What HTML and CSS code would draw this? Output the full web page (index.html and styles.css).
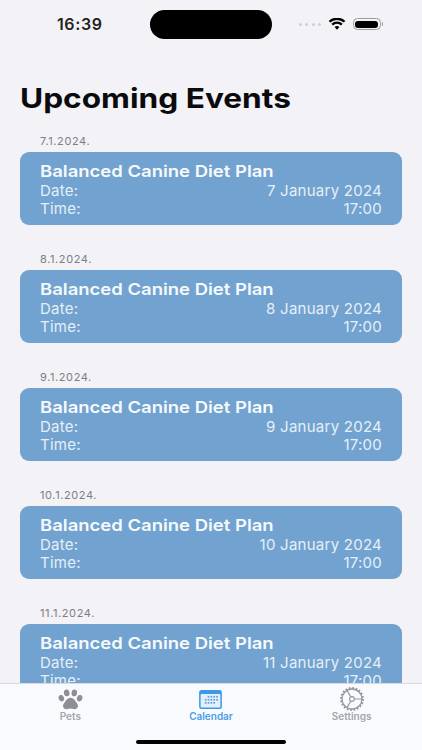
FILE: index.html
```html
<!DOCTYPE html>
<html lang="en">
<head>
<meta charset="utf-8">
<title>Upcoming Events</title>
<link rel="stylesheet" href="styles.css">
</head>
<body>
<div class="page">
  <header class="status">
    <span class="clock">16:39</span>
    <span class="island"></span>
    <span class="status-icons">
      <span class="dots"><i></i><i></i><i></i><i></i></span>
      <svg class="wifi" viewBox="0 0 18 13" width="18" height="12"><path d="M9 12.6 6.4 9.8a3.8 3.8 0 0 1 5.2 0zM4.6 8 2.9 6.2a8.9 8.9 0 0 1 12.2 0L13.4 8a6.4 6.4 0 0 0-8.8 0zM1.7 5 0 3.2a13 13 0 0 1 18 0L16.3 5a10.6 10.6 0 0 0-14.6 0z" fill="#000"/></svg>
      <span class="battery"><span class="battery-fill"></span></span>
      <span class="battery-cap"></span>
    </span>
  </header>
  <h1 class="title"><span class="title-text">Upcoming Events</span></h1>
  <main class="list">
    <section class="day">
      <div class="day-label">7.1.2024.</div>
      <article class="card">
        <div class="card-title"><span class="card-title-text">Balanced Canine Diet Plan</span></div>
        <div class="row"><span>Date:</span><span>7 January 2024</span></div>
        <div class="row"><span>Time:</span><span>17:00</span></div>
      </article>
    </section>
    <section class="day">
      <div class="day-label">8.1.2024.</div>
      <article class="card">
        <div class="card-title"><span class="card-title-text">Balanced Canine Diet Plan</span></div>
        <div class="row"><span>Date:</span><span>8 January 2024</span></div>
        <div class="row"><span>Time:</span><span>17:00</span></div>
      </article>
    </section>
    <section class="day">
      <div class="day-label">9.1.2024.</div>
      <article class="card">
        <div class="card-title"><span class="card-title-text">Balanced Canine Diet Plan</span></div>
        <div class="row"><span>Date:</span><span>9 January 2024</span></div>
        <div class="row"><span>Time:</span><span>17:00</span></div>
      </article>
    </section>
    <section class="day">
      <div class="day-label">10.1.2024.</div>
      <article class="card">
        <div class="card-title"><span class="card-title-text">Balanced Canine Diet Plan</span></div>
        <div class="row"><span>Date:</span><span>10 January 2024</span></div>
        <div class="row"><span>Time:</span><span>17:00</span></div>
      </article>
    </section>
    <section class="day">
      <div class="day-label">11.1.2024.</div>
      <article class="card">
        <div class="card-title"><span class="card-title-text">Balanced Canine Diet Plan</span></div>
        <div class="row"><span>Date:</span><span>11 January 2024</span></div>
        <div class="row"><span>Time:</span><span>17:00</span></div>
      </article>
    </section>
  </main>
  <nav class="tabbar">
    <div class="tab">
      <span class="icon-box"><svg viewBox="0 0 26 22" width="25" height="21"><g fill="#8e8e93"><ellipse cx="3.4" cy="9.6" rx="2.8" ry="3.4" transform="rotate(-20 3.4 9.6)"/><ellipse cx="9" cy="4" rx="2.9" ry="3.6" transform="rotate(-8 9 4)"/><ellipse cx="17" cy="4" rx="2.9" ry="3.6" transform="rotate(8 17 4)"/><ellipse cx="22.6" cy="9.6" rx="2.8" ry="3.4" transform="rotate(20 22.6 9.6)"/><path d="M13 9.2c3 0 4.600 2.600 6 4.600 1.300 1.900 2.200 3 1.700 4.900-.5 1.900-2.500 2.700-4.300 2.300-1.300-.3-2.200-.7-3.400-.7s-2.100.4-3.400.7c-1.800.4-3.800-.4-4.300-2.300-.5-1.900.4-3 1.700-4.900 1.400-2 3-4.600 6-4.600z"/></g></svg></span>
      <span class="tab-label">Pets</span>
    </div>
    <div class="tab tab-active">
      <span class="icon-box"><svg viewBox="0 0 24 20" width="23" height="19"><rect x="0" y="0" width="24" height="20" rx="2.500" fill="#3c98ec"/><rect x="1.600" y="4.200" width="20.800" height="14.200" rx="1" fill="#e3effa"/><g fill="#5f9fdc"><rect x="9" y="6.200" width="1.800" height="1.800"/><rect x="12" y="6.200" width="1.800" height="1.800"/><rect x="15" y="6.200" width="1.800" height="1.800"/><rect x="18" y="6.200" width="1.800" height="1.800"/><rect x="6" y="9.400" width="1.800" height="1.800"/><rect x="9" y="9.400" width="1.800" height="1.800"/><rect x="12" y="9.400" width="1.800" height="1.800"/><rect x="15" y="9.400" width="1.800" height="1.800"/><rect x="18" y="9.400" width="1.800" height="1.800"/><rect x="6" y="12.600" width="1.800" height="1.800"/><rect x="9" y="12.600" width="1.800" height="1.800"/><rect x="12" y="12.600" width="1.800" height="1.800"/><rect x="15" y="12.600" width="1.800" height="1.800"/></g></svg></span>
      <span class="tab-label">Calendar</span>
    </div>
    <div class="tab">
      <span class="icon-box"><svg viewBox="0 0 24 24" width="24" height="24"><circle cx="12" cy="12" r="10" fill="none" stroke="#97979c" stroke-width="1.300"/><circle cx="12" cy="12" r="11" fill="none" stroke="#97979c" stroke-width="2" stroke-dasharray="1.700 1.750"/><circle cx="12" cy="12" r="2.400" fill="none" stroke="#97979c" stroke-width="1.100"/><path d="M14.400 12H22M10.800 9.900 7 3.400M10.800 14.100 7 20.600" fill="none" stroke="#97979c" stroke-width="1.100"/></svg></span>
      <span class="tab-label">Settings</span>
    </div>
    <div class="home-bar"></div>
  </nav>
</div>
</body>
</html>
```
FILE: styles.css
```css
* { box-sizing: border-box; }
html, body { margin: 0; padding: 0; }
body { font-family: Inter, "Liberation Sans", sans-serif; background: #f2f2f7; }
.page { width: 422px; height: 750px; display: flex; flex-direction: column; overflow: hidden; position: relative; background: #f2f2f7; }
.status { height: 49px; padding: 10px 0 0 57px; display: flex; align-items: flex-start; flex: none; }
.clock { width: 93px; height: 29px; line-height: 29px; font-size: 16px; letter-spacing: .6px; font-weight: 600; color: #222; }
.island { width: 122px; height: 29px; border-radius: 15px; background: #000; }
.status-icons { margin-left: 27px; height: 28px; display: flex; align-items: center; }
.dots { display: flex; gap: 3.300px; margin-right: 7px; }
.dots i { width: 3px; height: 3px; border-radius: 50%; background: #cfcfd3; }
.wifi { margin-right: 7px; }
.battery { width: 28px; height: 12px; border-radius: 4.500px; border: 1px solid #9c9ca0; padding: 1.500px; display: flex; }
.battery-fill { flex: 1; background: #000; border-radius: 3px; }
.battery-cap { width: 1.500px; height: 4px; background: #9c9ca0; margin-left: 1px; border-radius: 0 1px 1px 0; }
.title { margin: 32px 0 0; padding-left: 20px; font-size: 27.500px; line-height: 34px; font-weight: 700; color: #0b0b0d; flex: none; }
.title-text { display: inline-block; transform: scaleX(1.150); transform-origin: left center; white-space: nowrap; }
.list { flex: 1; min-height: 0; overflow: hidden; padding: 18px 20px 0; display: flex; flex-direction: column; gap: 26px; }
.day { flex: none; }
.day-label { padding-left: 20px; height: 16px; line-height: 16px; font-size: 11px; letter-spacing: .6px; color: #7e7e83; margin-bottom: 3px; }
.card { height: 73px; background: #72a3d0; border-radius: 9px; padding: 8px 20px 0; color: #fff; }
.card-title { font-size: 16.500px; line-height: 22px; font-weight: 600; color: #f6f9fc; }
.card-title-text { display: inline-block; transform: scaleX(1.120); transform-origin: left center; white-space: nowrap; }
.row { display: flex; justify-content: space-between; font-size: 15px; letter-spacing: .25px; line-height: 18px; color: #e6eff7; }
.tabbar { flex: none; height: 67px; background: #f8fafd; border-top: 1px solid #d9dade; display: grid; grid-template-columns: 1fr 1fr 1fr; align-items: start; position: relative; }
.tab { display: flex; flex-direction: column; align-items: center; padding-top: 3px; color: #8e8e93; }
.icon-box { height: 24px; display: flex; align-items: center; justify-content: center; }
.tab-label { font-size: 10px; font-weight: 600; line-height: 11px; color: #a6a6ab; }
.tab-active .tab-label { color: #4d9de8; }
.home-bar { position: absolute; left: 136px; bottom: 6px; width: 150px; height: 4px; border-radius: 2px; background: #000; }
```
